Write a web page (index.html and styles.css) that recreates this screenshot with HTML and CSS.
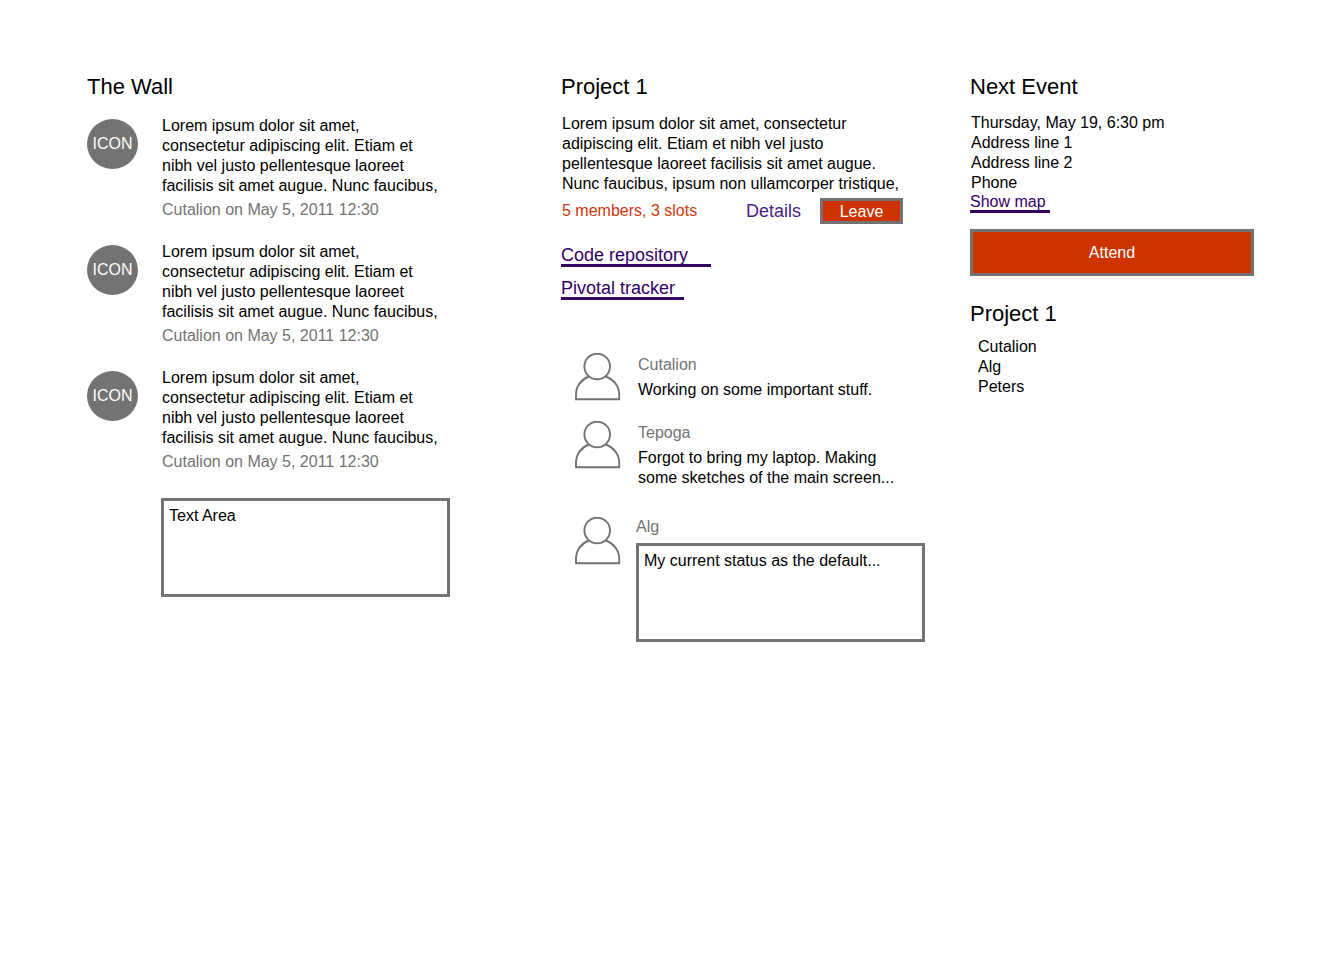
FILE: index.html
```html
<!DOCTYPE html>
<html lang="en">
<head>
<meta charset="utf-8">
<meta name="viewport" content="width=device-width, initial-scale=1">
<title>Project 1</title>
<link rel="stylesheet" href="styles.css">
</head>
<body>
<svg class="sprite" aria-hidden="true">
  <symbol id="person" viewBox="0 0 46 48">
    <path d="M14 23.500C6 26.500 1 33.500 1 41.500V46.300H44.200V41.500C44.200 33.500 39 26.500 30.500 23.500" fill="none" stroke="#737373" stroke-width="1.900"/>
    <circle cx="22.200" cy="13.500" r="12.800" fill="none" stroke="#737373" stroke-width="1.900"/>
  </symbol>
</svg>
<main class="page">
  <section class="wall">
    <h2 class="title">The Wall</h2>
    <ul class="posts">
      <li class="post">
        <span class="badge">ICON</span>
        <div class="post-body">
          <p>Lorem ipsum dolor sit amet, consectetur adipiscing elit. Etiam et nibh vel justo pellentesque laoreet facilisis sit amet augue. Nunc faucibus,</p>
          <p class="meta">Cutalion on May 5, 2011 12:30</p>
        </div>
      </li>
      <li class="post">
        <span class="badge">ICON</span>
        <div class="post-body">
          <p>Lorem ipsum dolor sit amet, consectetur adipiscing elit. Etiam et nibh vel justo pellentesque laoreet facilisis sit amet augue. Nunc faucibus,</p>
          <p class="meta">Cutalion on May 5, 2011 12:30</p>
        </div>
      </li>
      <li class="post">
        <span class="badge">ICON</span>
        <div class="post-body">
          <p>Lorem ipsum dolor sit amet, consectetur adipiscing elit. Etiam et nibh vel justo pellentesque laoreet facilisis sit amet augue. Nunc faucibus,</p>
          <p class="meta">Cutalion on May 5, 2011 12:30</p>
        </div>
      </li>
    </ul>
    <div class="compose"><textarea class="field" aria-label="New wall post">Text Area</textarea></div>
  </section>

  <section class="project">
    <h2 class="title">Project 1</h2>
    <div class="summary">
      <p>Lorem ipsum dolor sit amet, consectetur adipiscing elit. Etiam et nibh vel justo pellentesque laoreet facilisis sit amet augue. Nunc faucibus, ipsum non ullamcorper tristique,</p>
      <div class="actions">
        <span class="slots">5 members, 3 slots</span>
        <a class="details" href="#details">Details</a>
        <button class="button leave" type="button">Leave</button>
      </div>
    </div>
    <nav class="links">
      <a class="link link-code" href="#code">Code repository</a>
      <a class="link link-tracker" href="#tracker">Pivotal tracker</a>
    </nav>
    <ul class="statuses">
      <li class="status">
        <svg class="avatar" aria-hidden="true"><use href="#person"/></svg>
        <div class="status-body">
          <p class="name">Cutalion</p>
          <p class="message">Working on some important stuff.</p>
        </div>
      </li>
      <li class="status">
        <svg class="avatar" aria-hidden="true"><use href="#person"/></svg>
        <div class="status-body">
          <p class="name">Tepoga</p>
          <p class="message">Forgot to bring my laptop. Making some sketches of the main screen...</p>
        </div>
      </li>
      <li class="status own">
        <svg class="avatar" aria-hidden="true"><use href="#person"/></svg>
        <div class="status-form">
          <label class="name" for="status">Alg</label>
          <textarea class="field" id="status">My current status as the default...</textarea>
        </div>
      </li>
    </ul>
  </section>

  <section class="event">
    <h2 class="title">Next Event</h2>
    <address class="where">
      <p>Thursday, May 19, 6:30 pm</p>
      <p>Address line 1</p>
      <p>Address line 2</p>
      <p>Phone</p>
    </address>
    <a class="map" href="#map">Show map</a>
    <button class="button attend" type="button">Attend</button>
    <h2 class="title">Project 1</h2>
    <ul class="people">
      <li>Cutalion</li>
      <li>Alg</li>
      <li>Peters</li>
    </ul>
  </section>
</main>
</body>
</html>
```
FILE: styles.css
```css
* {
  box-sizing: border-box;
}

body {
  margin: 0;
  background: #fff;
  color: #000;
  font: 16px/20px "Liberation Sans", Arial, sans-serif;
}

p,
ul {
  margin: 0;
  padding: 0;
  list-style: none;
}

.sprite {
  position: absolute;
  width: 0;
  height: 0;
}

.page {
  display: grid;
  grid-template-columns: 474fr 409fr 284fr;
  padding: 73px 84px 72px 87px;
}

.title {
  margin: 0;
  font-size: 22px;
  line-height: 28px;
  font-weight: normal;
}

/* Wall */
.wall {
  padding-right: 111px;
}

.posts {
  display: flex;
  flex-direction: column;
  gap: 22px;
  margin-top: 15px;
}

.post {
  display: flex;
  gap: 24px;
}

.badge {
  flex: none;
  width: 51px;
  height: 50px;
  margin-top: 3px;
  border-radius: 50%;
  background: #737373;
  color: #fff;
  line-height: 50px;
  text-align: center;
}

.post-body {
  max-width: 280px;
}

.meta {
  margin-top: 4px;
}

.meta,
.name {
  color: #737373;
}

.compose {
  margin-top: 26px;
  padding-left: 74px;
}

.field {
  display: block;
  width: 100%;
  height: 99px;
  margin: 0;
  padding: 5px;
  border: 3px solid #737373;
  border-radius: 0;
  background: #fff;
  color: #000;
  font: inherit;
  resize: none;
}

/* Project */
.project {
  padding-right: 45px;
}

.summary {
  max-width: 342px;
  margin-top: 13px;
  padding-left: 1px;
}

.actions {
  display: flex;
  align-items: center;
  margin-top: 4px;
}

.slots {
  flex: 1;
  color: #d0370a;
}

.details {
  margin-right: 19px;
  color: #4a2085;
  font-size: 18px;
  text-decoration: none;
}

.button {
  padding: 1px 0 0;
  border: 3px solid #737373;
  border-radius: 0;
  background: #cc3300;
  color: #fff;
  font: inherit;
}

.leave {
  width: 83px;
  height: 26px;
}

.links {
  display: flex;
  flex-direction: column;
  align-items: flex-start;
  gap: 12px;
  margin-top: 22px;
}

.link,
.map {
  border-bottom: 3px solid #330066;
  color: #330066;
  text-decoration: none;
}

.link {
  font-size: 18px;
  line-height: 18px;
}

.link-code {
  padding-right: 23px;
}

.link-tracker {
  padding-right: 9px;
}

.statuses {
  margin-top: 53px;
  padding-left: 14px;
}

.status {
  display: flex;
  gap: 17px;
  margin-bottom: 20px;
}

.status.own {
  gap: 15px;
  margin-top: 29px;
}

.avatar {
  flex: none;
  width: 46px;
  height: 48px;
}

.status-body {
  max-width: 280px;
  padding-top: 2px;
}

.message {
  margin-top: 5px;
}

.status-form {
  flex: 1;
}

.status-form .name {
  display: block;
  margin-bottom: 6px;
}

/* Event */
.where {
  margin: 12px 0 1px 1px;
  font-style: normal;
}

.map {
  display: table;
  padding-right: 4px;
  line-height: 16px;
}

.attend {
  display: block;
  width: 100%;
  height: 47px;
  margin: 16px 0 24px;
}

.people {
  margin-top: 9px;
  padding-left: 8px;
}
```
